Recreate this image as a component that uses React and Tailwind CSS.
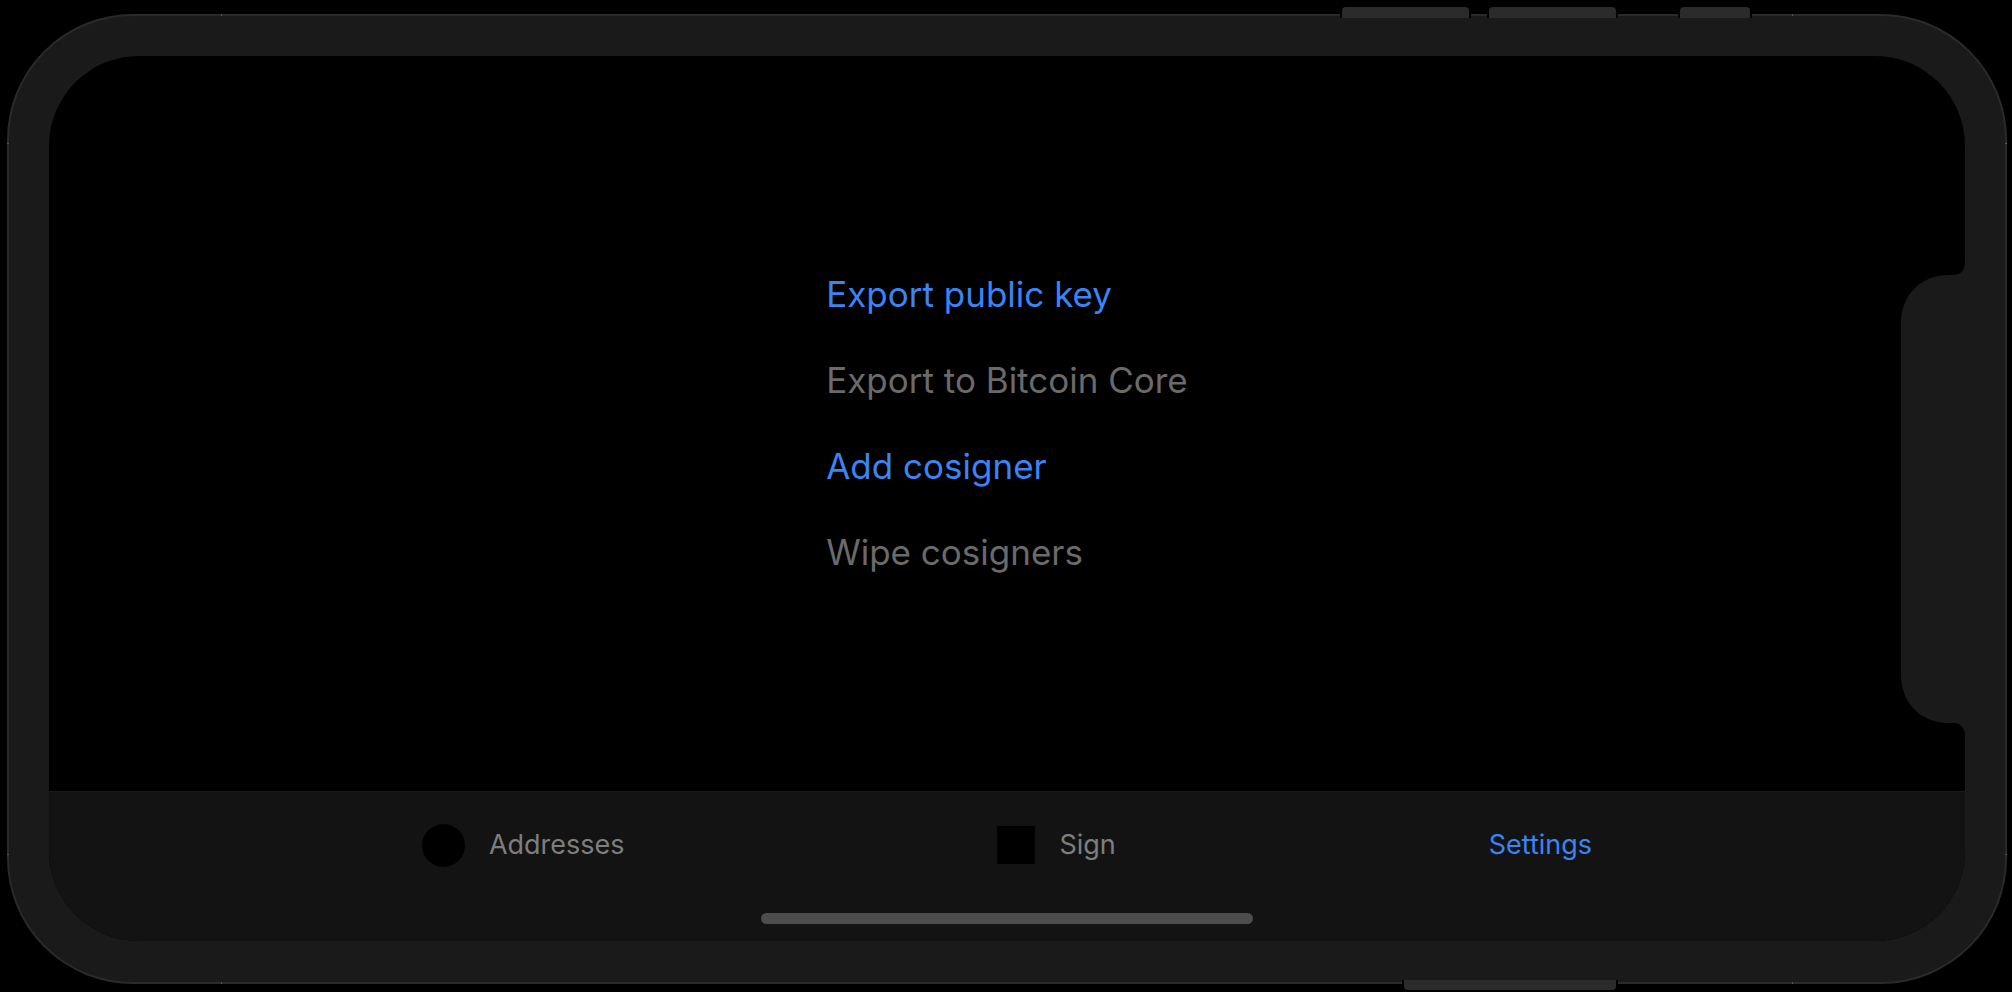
const actions = [
  { label: "Export public key", enabled: true },
  { label: "Export to Bitcoin Core", enabled: false },
  { label: "Add cosigner", enabled: true },
  { label: "Wipe cosigners", enabled: false },
];

function Notch() {
  return (
    <svg
      className="absolute top-1/2 right-0 -translate-y-1/2"
      width="64"
      height="476"
      viewBox="0 0 64 476"
      fill="#1a1a1a"
      aria-hidden="true"
    >
      <path d="M64 0C64 9 60 14 52 14H48C18 14 0 36 0 62V414C0 440 18 462 48 462H52C60 462 64 467 64 476Z" />
    </svg>
  );
}

function Tab({ label, icon, active }) {
  return (
    <button
      type="button"
      className={
        active
          ? "flex items-center gap-6 text-[#3a84f6]"
          : "flex items-center gap-6 text-[#7e7e7e]"
      }
    >
      {icon}
      <span className="text-[27px] leading-8">{label}</span>
    </button>
  );
}

export default function App() {
  return (
    <div className="flex min-h-screen flex-col bg-black font-['Inter',sans-serif]">
      <div className="z-10 flex justify-end pt-[5px] pr-[260px]">
        <span className="mr-4 h-[13px] w-[131px] rounded-t-md border-x-2 border-t-2 border-black bg-[#2b2b2b]" />
        <span className="mr-[60px] h-[13px] w-[131px] rounded-t-md border-x-2 border-t-2 border-black bg-[#2b2b2b]" />
        <span className="h-[13px] w-[74px] rounded-t-md border-x-2 border-t-2 border-black bg-[#2b2b2b]" />
      </div>

      <div className="relative -my-1 mr-[5px] ml-[7px] flex flex-1 rounded-[126px] border-2 border-[#2a2a2a] bg-[#1a1a1a] px-10 pt-10 pb-[41px]">
        <span className="absolute inset-x-[212px] -top-[2px] h-[2px] border-x border-[#555]" />
        <span className="absolute inset-x-[212px] -bottom-[2px] h-[2px] border-x border-[#555]" />
        <span className="absolute inset-y-[127px] -left-[2px] w-[2px] border-y border-[#555]" />
        <span className="absolute inset-y-[127px] -right-[2px] w-[2px] border-y border-[#555]" />

        <main className="relative flex flex-1 flex-col overflow-hidden rounded-[90px] bg-black">
          <div className="flex flex-1 items-center justify-center">
            <div className="flex flex-col items-start gap-[43px]">
              {actions.map(({ label, enabled }) => (
                <button
                  key={label}
                  type="button"
                  disabled={!enabled}
                  className="text-[35px] leading-[43px] text-[#3a84f6] disabled:text-[#6a6a6a]"
                >
                  {label}
                </button>
              ))}
            </div>
          </div>

          <nav className="flex flex-col items-center gap-[15px] border-t border-[#1a1a1a] bg-[#131313] pb-[17px]">
            <div className="flex h-[106px] w-full items-center justify-evenly">
              <Tab
                label="Addresses"
                icon={<span className="size-[43px] rounded-full bg-black" />}
              />
              <Tab label="Sign" icon={<span className="size-[38px] bg-black" />} />
              <Tab label="Settings" active />
            </div>
            <div className="h-[11px] w-[492px] rounded-full bg-[#4d4d4d]" />
          </nav>

          <Notch />
        </main>
      </div>

      <div className="z-10 flex justify-end pr-[394px]">
        <span className="h-[12px] w-[216px] rounded-b-md border-x-2 border-b-2 border-black bg-[#2b2b2b]" />
      </div>
    </div>
  );
}
